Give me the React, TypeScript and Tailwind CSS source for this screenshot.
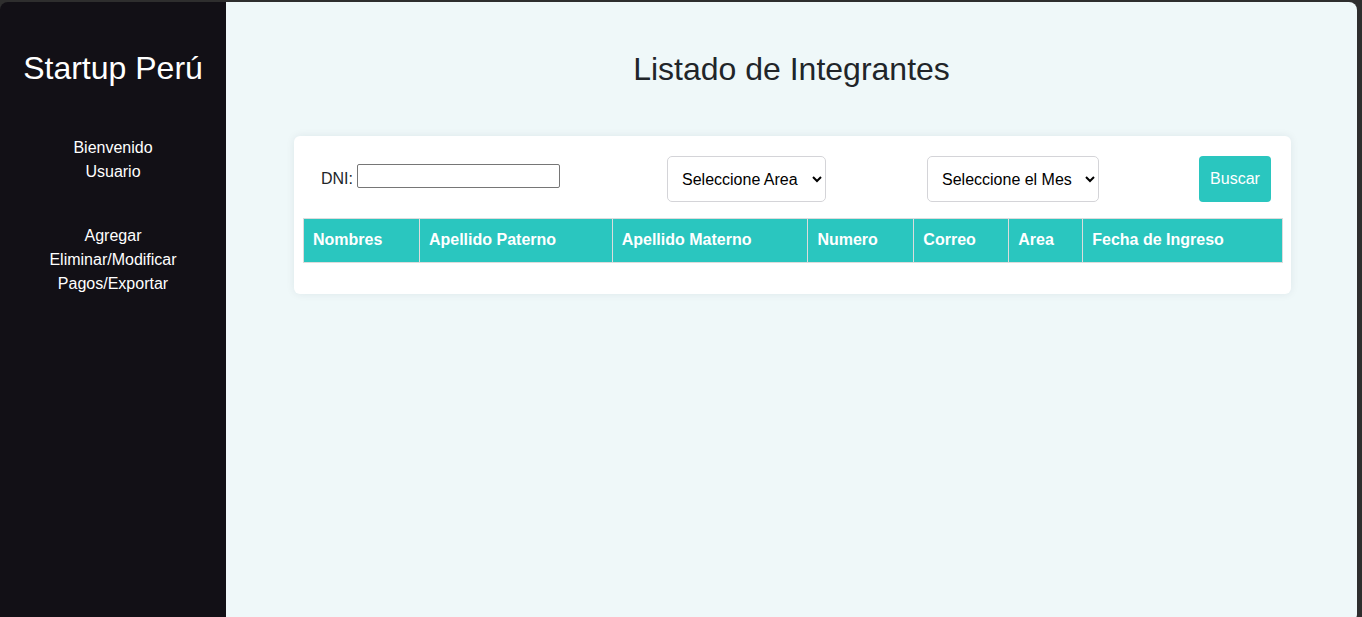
const columns = [
  { label: "Nombres", width: "w-[116px]" },
  { label: "Apellido Paterno", width: "w-[193px]" },
  { label: "Apellido Materno", width: "w-[196px]" },
  { label: "Numero", width: "w-[106px]" },
  { label: "Correo", width: "w-[95px]" },
  { label: "Area", width: "w-[74px]" },
  { label: "Fecha de Ingreso", width: "w-[200px]" },
];

const menu = ["Agregar", "Eliminar/Modificar", "Pagos/Exportar"];

export default function App() {
  return (
    <div className="h-[617px] w-[1362px] overflow-hidden bg-[#2e2e2e] pt-[2px] pr-[5px] font-['Liberation_Sans',Arial,sans-serif]">
      <div className="flex h-[620px] overflow-hidden rounded-t-[8px] rounded-br-[8px]">
        {/* Sidebar */}
        <aside className="flex w-[226px] shrink-0 flex-col items-center bg-[#121016] pt-[48px] text-center text-white">
          <h1 className="text-[32px] leading-[37px]">Startup Perú</h1>
          <div className="mt-[49px] text-[16px] leading-[24px]">
            <p>Bienvenido</p>
            <p>Usuario</p>
          </div>
          <ul className="mt-[40px] text-[16px] leading-[24px]">
            {menu.map((item) => (
              <li key={item}>
                <a href="#">{item}</a>
              </li>
            ))}
          </ul>
        </aside>

        {/* Main */}
        <main className="flex-1 bg-[#eff8f9] pt-[49px]">
          <h2 className="text-center text-[32px] leading-[37px] text-[#212529]">
            Listado de Integrantes
          </h2>

          <section className="mt-[48px] ml-[68px] w-[997px] rounded-[6px] bg-white pt-[20px] pb-[31px] shadow-[0_0_8px_rgba(0,40,60,0.08)]">
            <div className="flex items-center pl-[27px]">
              <label className="flex items-center gap-[4px] text-[16px] text-[#212529]">
                DNI:
                <input
                  type="text"
                  className="mb-[7px] h-[24px] w-[203px] rounded-[2px] border border-[#767676] bg-white px-[2px]"
                />
              </label>
              <select className="ml-[107px] h-[46px] w-[159px] rounded-[5px] border border-[#d4d4d8] bg-white pl-[10px] text-[16px] text-black">
                <option>Seleccione Area</option>
              </select>
              <select className="ml-[101px] h-[46px] w-[172px] rounded-[5px] border border-[#d4d4d8] bg-white pl-[10px] text-[16px] text-black">
                <option>Seleccione el Mes</option>
              </select>
              <button
                type="button"
                className="ml-[100px] h-[46px] w-[72px] rounded-[4px] bg-[#2ac6bf] text-[16px] text-white"
              >
                Buscar
              </button>
            </div>

            <table className="mt-[16px] ml-[9px] w-[980px] border-collapse">
              <thead>
                <tr className="h-[44px] bg-[#2ac6bf]">
                  {columns.map((c) => (
                    <th
                      key={c.label}
                      className={`${c.width} border border-[#dcdcdc] pl-[9px] pr-[10px] pb-[2px] text-left text-[16px] font-bold text-white`}
                    >
                      {c.label}
                    </th>
                  ))}
                </tr>
              </thead>
              <tbody />
            </table>
          </section>
        </main>
      </div>
    </div>
  );
}
